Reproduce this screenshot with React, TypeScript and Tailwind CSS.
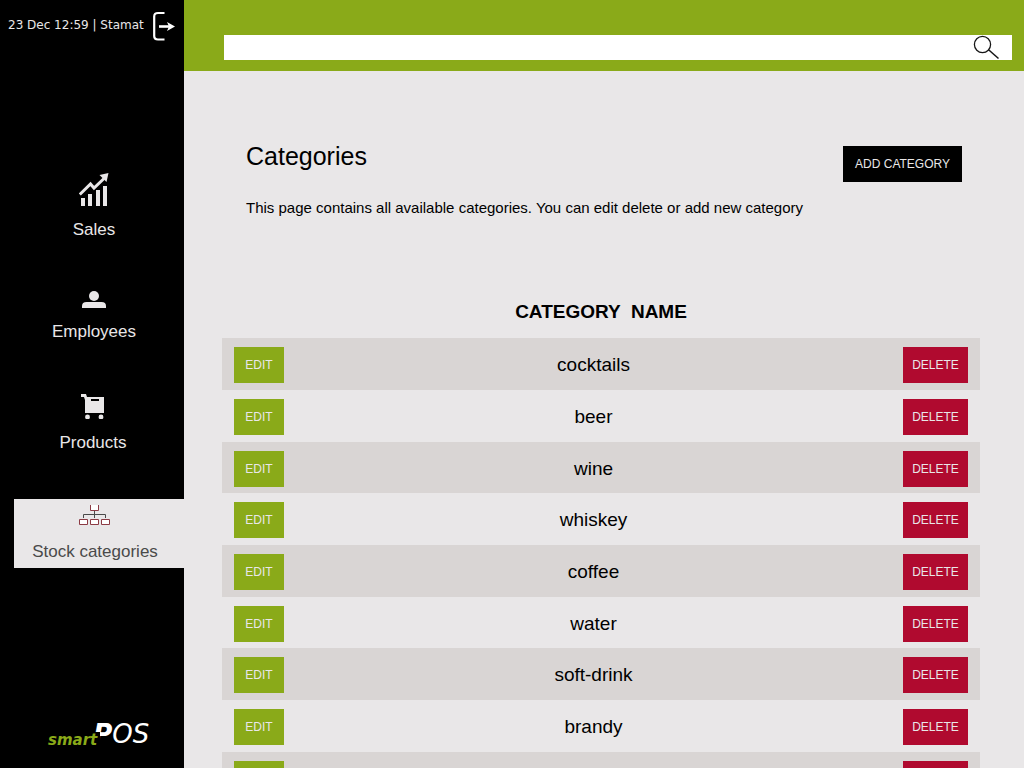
import type { ReactNode } from "react";

const categories = [
  "cocktails",
  "beer",
  "wine",
  "whiskey",
  "coffee",
  "water",
  "soft-drink",
  "brandy",
  "vodka",
];

function LogoutIcon() {
  return (
    <svg width="24" height="32" viewBox="0 0 24 32" fill="none" stroke="#fff" aria-hidden="true">
      <path d="M12.5 3H6Q2.2 3 2.2 6.5V26Q2.2 29.5 6 29.5H12.5" strokeWidth="2.2" />
      <path d="M7 16.5H19" strokeWidth="2.6" />
      <path d="M15 12L23 16.5L15 21L17 16.5Z" fill="#fff" stroke="none" />
    </svg>
  );
}

function SalesIcon() {
  return (
    <svg width="30" height="34" viewBox="0 0 30 34" fill="#e9e7e8" aria-hidden="true">
      <path d="M2 25h4v8h-4zM9 21h4v12h-4zM17 17h4v16h-4zM24 13h4v20h-4z" />
      <path d="M0.8 21.5L11.5 11L15 15L25 5.5" fill="none" stroke="#e9e7e8" strokeWidth="3" />
      <path d="M20.5 2L29.5 0L27.5 9Z" />
    </svg>
  );
}

function EmployeesIcon() {
  return (
    <svg width="24" height="17" viewBox="0 0 24 17" fill="#e9e7e8" aria-hidden="true">
      <circle cx="12" cy="5" r="5" />
      <path d="M0 17V15Q0 11 4.5 11H19.5Q24 11 24 15V17Z" />
    </svg>
  );
}

function ProductsIcon() {
  return (
    <svg width="24" height="25" viewBox="0 0 24 25" fill="#e9e7e8" aria-hidden="true">
      <path fillRule="evenodd" d="M0 0H5L6 3H23V19H4V6L3 3H0ZM10 5V7H18V5Z" />
      <circle cx="6.5" cy="23" r="2.4" />
      <circle cx="20" cy="23" r="2.4" />
    </svg>
  );
}

function StockIcon() {
  return (
    <svg width="32" height="20" viewBox="0 0 32 20" fill="none" aria-hidden="true">
      <path d="M4.5 13V9.5H26.5V13M15.5 6V13" stroke="#4a4a4a" />
      <g stroke="#8c3b44" fill="#fff">
        <path d="M11.5 0V5.5H19.5V0" />
        <path d="M0.5 14.5h8v5h-8zM11.5 14.5h8v5h-8zM22.5 14.5h8v5h-8z" />
      </g>
    </svg>
  );
}

function NavItem({ icon, label, className }: { icon: ReactNode; label: string; className: string }) {
  return (
    <a href="#" className={`flex flex-col items-center text-[17px] leading-6 ${className}`}>
      {icon}
      <span>{label}</span>
    </a>
  );
}

function Sidebar() {
  return (
    <aside className="flex w-46 shrink-0 flex-col bg-black text-[#e9e7e8]">
      <div className="flex items-start justify-between pt-[10px] pr-2 pl-2">
        <span className="pt-[7px] font-['DejaVu_Sans',sans-serif] text-xs leading-4 whitespace-nowrap">
          23 Dec 12:59 | Stamat
        </span>
        <button type="button" aria-label="Log out">
          <LogoutIcon />
        </button>
      </div>
      <nav className="mt-[131px] flex flex-col">
        <NavItem icon={<SalesIcon />} label="Sales" className="gap-[11px] pl-1" />
        <NavItem icon={<EmployeesIcon />} label="Employees" className="mt-[49px] gap-3 pl-1" />
        <NavItem icon={<ProductsIcon />} label="Products" className="mt-[50px] gap-3 pl-[2px]" />
        <NavItem
          icon={<StockIcon />}
          label="Stock categories"
          className="mt-[44px] ml-[14px] gap-[15px] bg-[#e9e7e8] pt-[6px] pr-2 pb-1 text-[#4a4a4a]"
        />
      </nav>
      <div className="mt-auto flex items-end pb-[18px] pl-12 font-['DejaVu_Sans',sans-serif] italic">
        <span className="z-10 mb-[2px] bg-black pr-[3px] text-[15px] leading-4 font-bold text-[#8aaa19]">smart</span>
        <span className="-ml-[7px] text-[26px] leading-8 text-white">
          <span className="font-bold">P</span>OS
        </span>
      </div>
    </aside>
  );
}

export default function App() {
  return (
    <div className="flex h-screen overflow-hidden bg-[#e9e7e8] font-['Liberation_Sans',Arial,sans-serif] text-black">
      <Sidebar />
      <div className="flex min-w-0 flex-1 flex-col">
        <header className="shrink-0 bg-[#8aaa19] pt-[35px] pr-3 pb-[11px] pl-10">
          <form className="flex h-[25px] items-center bg-white pr-3">
            <input type="search" aria-label="Search" className="h-full min-w-0 flex-1 px-2 text-sm outline-none" />
            <button type="button" aria-label="Search">
              <svg width="27" height="25" viewBox="0 0 27 25" fill="none" stroke="#161616" aria-hidden="true">
                <circle cx="9.5" cy="9.5" r="8.1" strokeWidth="1.3" />
                <path d="M15.3 14.5L25.5 23.5" strokeWidth="1.5" />
              </svg>
            </button>
          </form>
        </header>
        <main className="flex-1 pr-11 pl-[38px]">
          <div className="flex items-start justify-between pt-[70px] pr-[18px] pl-6">
            <div>
              <h1 className="text-[25px] leading-[30px]">Categories</h1>
              <p className="mt-[27px] text-[15px] leading-5">
                This page contains all available categories. You can edit delete or add new category
              </p>
            </div>
            <button type="button" className="mt-[5px] h-9 w-[119px] bg-black text-xs text-[#e9e7e8]">
              ADD CATEGORY
            </button>
          </div>
          <table className="mt-[82px] w-full border-collapse text-center">
            <thead>
              <tr>
                <th colSpan={3} className="h-[38px] p-0 pb-[14px] text-[19px] leading-6 whitespace-pre">
                  {"CATEGORY  NAME"}
                </th>
              </tr>
            </thead>
            <tbody>
              {categories.map((name) => (
                <tr key={name} className="h-[52px] odd:bg-[#d9d5d4] nth-[3n]:h-[51px]">
                  <td className="w-[62px] p-0 pt-[9px] pl-3 align-top">
                    <button type="button" className="block h-9 w-[50px] bg-[#8aaa19] text-xs text-[#e9e7e8]">
                      EDIT
                    </button>
                  </td>
                  <td className="p-0 pt-[15px] align-top text-[19px] leading-6">{name}</td>
                  <td className="w-[77px] p-0 pt-[9px] pr-3 align-top">
                    <button type="button" className="block h-9 w-[65px] bg-[#b00a2f] text-xs text-[#e9e7e8]">
                      DELETE
                    </button>
                  </td>
                </tr>
              ))}
            </tbody>
          </table>
        </main>
      </div>
    </div>
  );
}
